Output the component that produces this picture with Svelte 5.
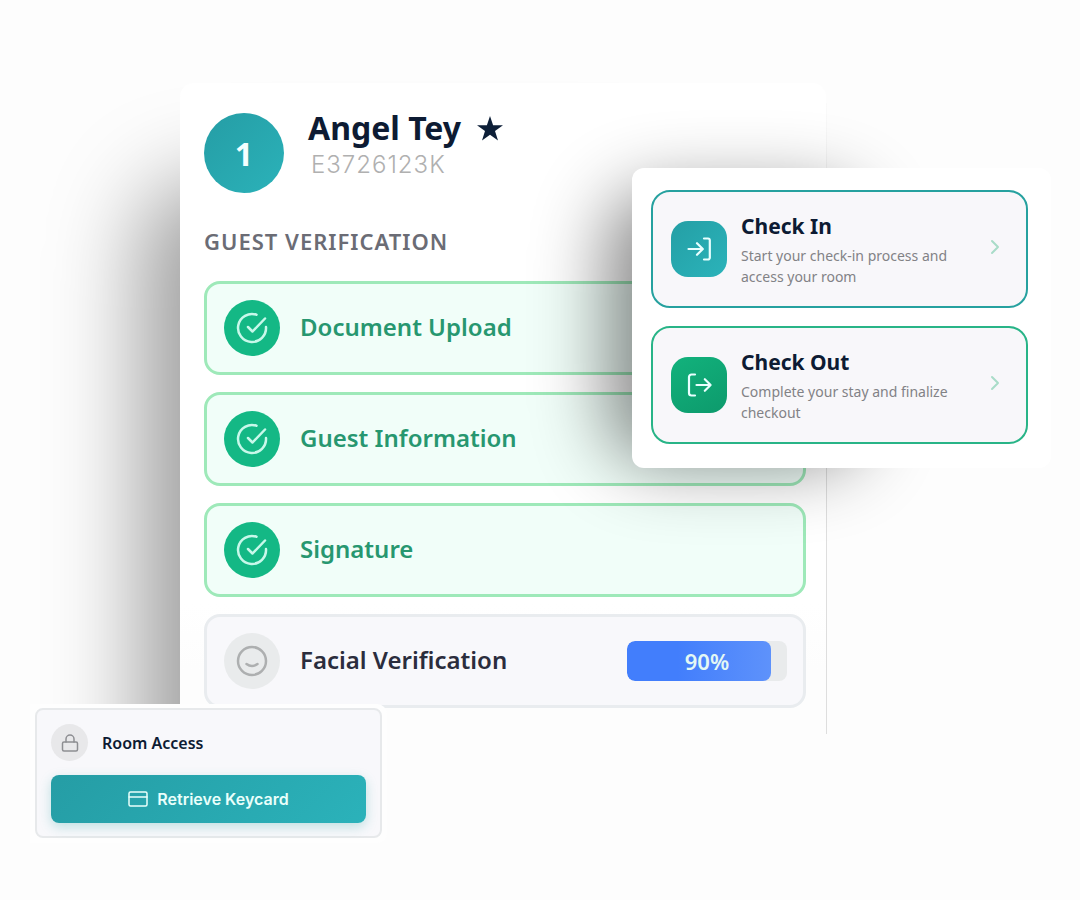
<script>
  const steps = [
    { label: 'Document Upload', done: true },
    { label: 'Guest Information', done: true },
    { label: 'Signature', done: true },
    { label: 'Facial Verification', done: false, progress: 90 }
  ];

  const actions = [
    { kind: 'in', title: 'Check In', text: 'Start your check-in process and access your room' },
    { kind: 'out', title: 'Check Out', text: 'Complete your stay and finalize checkout' }
  ];
</script>

<main class="stage">
  <section class="guest-wrap">
    <div class="guest">
      <header class="guest-head">
        <span class="avatar">1</span>
        <div class="who">
          <h1>
            Angel Tey
            <svg class="star" viewBox="0 0 26 25" aria-hidden="true">
              <path d="M13 0l3.1 9.3H26l-8 5.8 3 9.4-8-5.8-8 5.8 3-9.4-8-5.8h9.9z" fill="#0d1f38" />
            </svg>
          </h1>
          <p>E3726123K</p>
        </div>
      </header>

      <h2>GUEST VERIFICATION</h2>

      <ul class="steps">
        {#each steps as step}
          <li class="step" class:done={step.done}>
            <span class="badge">
              {#if step.done}
                <svg viewBox="0 0 32 32" aria-hidden="true">
                  <path d="M20.500 2.700A14 14 0 1 0 30 15" />
                  <path d="M12 15l4.500 4.500L29 6.500" />
                </svg>
              {:else}
                <svg viewBox="0 0 32 32" aria-hidden="true">
                  <circle cx="16" cy="16" r="14" />
                  <path d="M10.500 19q5.500 4 11 0" />
                </svg>
              {/if}
            </span>
            <span class="label">{step.label}</span>
            {#if step.progress}
              <div
                class="track"
                role="progressbar"
                aria-label={step.label}
                aria-valuenow={step.progress}
                aria-valuemin="0"
                aria-valuemax="100"
              >
                <div class="fill" style="width: {step.progress}%"></div>
                <span>{step.progress}%</span>
              </div>
            {/if}
          </li>
        {/each}
      </ul>
    </div>
  </section>

  <section class="actions-wrap">
    <div class="actions">
      {#each actions as action}
        <button class="action {action.kind}" type="button">
          <span class="tile">
            <svg viewBox="0 0 24 24" aria-hidden="true">
              {#if action.kind === 'in'}
                <path d="M17 1.500H21a1.800 1.800 0 0 1 1.800 1.800v17.400a1.800 1.800 0 0 1-1.800 1.800h-4" />
                <path d="M1.500 12h14M10 6.200L15.800 12l-5.800 5.800" />
              {:else}
                <path d="M8 1.500H4.500a2.500 2.500 0 0 0-2.500 2.500v16A2.500 2.500 0 0 0 4.500 22.500h3.500" />
                <path d="M9.500 12h14M17.800 6.200L23.600 12l-5.800 5.800" />
              {/if}
            </svg>
          </span>
          <span class="copy">
            <strong>{action.title}</strong>
            <small>{action.text}</small>
          </span>
          <svg class="chevron" viewBox="0 0 8 14" aria-hidden="true">
            <path d="M1 1l6 6-6 6" />
          </svg>
        </button>
      {/each}
    </div>
  </section>

  <section class="room-wrap">
    <div class="room">
      <div class="room-head">
        <span class="lock">
          <svg viewBox="0 0 18 18" aria-hidden="true">
            <rect x="1.500" y="8" width="15" height="9" rx="1.500" />
            <path d="M5 8V5a4 4 0 0 1 8 0v3" />
          </svg>
        </span>
        <h3>Room Access</h3>
      </div>
      <button class="retrieve" type="button">
        <svg viewBox="0 0 20 16" aria-hidden="true">
          <rect x="1" y="1" width="18" height="14" rx="1.500" />
          <path d="M1 6h18" />
        </svg>
        Retrieve Keycard
      </button>
    </div>
  </section>
</main>

<style>
  :global(body) {
    margin: 0;
    background: #fdfdfd;
  }

  .stage {
    position: relative;
    box-sizing: border-box;
    max-width: 1080px;
    min-height: 100vh;
    margin: 0 auto;
    padding: 83px 254px 165px 180px;
    overflow: hidden;
    font-family: 'Noto Sans', sans-serif;
    color: #0d1b33;
  }

  h1, h2, h3, p, ul {
    margin: 0;
    padding: 0;
  }

  svg {
    fill: none;
    stroke: currentColor;
    stroke-linecap: round;
    stroke-linejoin: round;
    flex: none;
    overflow: visible;
  }

  .guest-wrap {
    position: relative;
    isolation: isolate;
    clip-path: inset(-83px -254px 0 -180px);
  }

  .guest-wrap::before {
    content: '';
    position: absolute;
    z-index: -1;
    inset: 120px 120px -120px 0;
    border-radius: 40px;
    box-shadow: -18px 0 90px 22px rgba(0, 0, 0, 0.37);
  }

  .guest-wrap::after {
    content: '';
    position: absolute;
    inset: 20px -1px 0 auto;
    width: 1px;
    background: linear-gradient(#fafafa, #dedede 50%);
  }

  .guest {
    padding: 30px 20px 26px 24px;
    border-radius: 14px 14px 0 0;
    background: linear-gradient(#fff 80%, #fdfdfd 90%);
  }

  .guest-head {
    display: flex;
    gap: 24px;
    align-items: flex-start;
  }

  .avatar {
    display: grid;
    place-items: center;
    width: 80px;
    height: 80px;
    border-radius: 50%;
    background: linear-gradient(135deg, #259da5, #2bb2b9);
    color: #f4ffff;
    font-size: 32px;
    font-weight: 700;
  }

  h1 {
    display: flex;
    align-items: center;
    gap: 16px;
    font-size: 32px;
    line-height: 30px;
    font-weight: 700;
  }

  .star {
    width: 26px;
    height: 25px;
    stroke: none;
  }

  .who p {
    padding-left: 3px;
    font-family: Inter, sans-serif;
    font-size: 24px;
    line-height: 44px;
    font-weight: 300;
    letter-spacing: 1px;
    color: #b0b0b0;
  }

  h2 {
    margin-top: 34px;
    font-size: 22px;
    line-height: 29px;
    font-weight: 600;
    letter-spacing: 1px;
    color: #6b6c75;
  }

  .steps {
    display: grid;
    gap: 17px;
    margin-top: 25px;
    list-style: none;
  }

  .step {
    display: flex;
    align-items: center;
    gap: 20px;
    padding: 16px 16px 16px 17px;
    border: 3px solid #e9ecef;
    border-radius: 16px;
    background: #f8f8fb;
    color: #2b2d3d;
  }

  .step.done {
    border-color: #9ee9b9;
    background: #f1fef9;
    color: #279770;
  }

  .badge {
    display: grid;
    place-items: center;
    width: 56px;
    height: 56px;
    border-radius: 50%;
    background: #e9ebec;
    color: #adafb0;
  }

  .done .badge {
    background: #14b885;
    color: #c8f8ea;
  }

  .badge svg {
    width: 32px;
    height: 32px;
    stroke-width: 2.500;
  }

  .label {
    flex: 1;
    padding-bottom: 3px;
    font-size: 24px;
    font-weight: 600;
  }

  .track {
    position: relative;
    display: grid;
    place-items: center;
    width: 160px;
    height: 40px;
    border-radius: 8px;
    background: #e9ebec;
    overflow: hidden;
    color: #e3f8f4;
    font-size: 22px;
    font-weight: 600;
  }

  .fill {
    position: absolute;
    inset: 0 auto 0 0;
    border-radius: 8px;
    background: linear-gradient(90deg, #427efc 35%, #5e92fb);
  }

  .track span {
    position: relative;
  }

  .actions-wrap {
    position: absolute;
    top: 168px;
    right: 29px;
    width: 419px;
    isolation: isolate;
  }

  .actions-wrap::before {
    content: '';
    position: absolute;
    z-index: -1;
    inset: 58px 222px 39px 10px;
    border-radius: 20px;
    box-shadow: 0 0 72px 36px rgba(0, 0, 0, 0.46);
  }

  .actions {
    display: grid;
    gap: 18px;
    padding: 22px 23px 24px 19px;
    border-radius: 12px;
    background: #fff;
  }

  .action {
    display: flex;
    align-items: center;
    gap: 14px;
    width: 100%;
    min-height: 118px;
    padding: 0 27px 0 18px;
    border: 2px solid #26a19f;
    border-radius: 19px;
    background: #f8f7fa;
    color: inherit;
    font: inherit;
    text-align: left;
  }

  .action.out {
    border-color: #28b487;
  }

  .tile {
    display: grid;
    place-items: center;
    flex: none;
    width: 56px;
    height: 56px;
    border-radius: 17px;
    background: linear-gradient(135deg, #249fa5, #2bb3ba);
    color: #e9ffff;
  }

  .out .tile {
    background: linear-gradient(150deg, #12b27c, #0d9a6c);
  }

  .tile svg {
    width: 24px;
    height: 24px;
    stroke-width: 2.200;
  }

  .copy {
    flex: 1;
  }

  .copy strong {
    display: block;
    font-size: 21px;
    line-height: 30px;
    font-weight: 700;
  }

  .copy small {
    display: block;
    max-width: 220px;
    margin-top: 4px;
    font-size: 14px;
    line-height: 21px;
    color: #828286;
  }

  .chevron {
    width: 8px;
    height: 14px;
    margin-bottom: 4px;
    color: #a9dcc8;
    stroke-width: 2;
  }

  .room-wrap {
    position: absolute;
    top: 704px;
    left: 30px;
    width: 357px;
    box-sizing: border-box;
    padding: 4px 5px 5px;
    border-radius: 0 10px 10px 0;
    background: #fefefe;
  }

  .room {
    padding: 14px 14px 13px;
    border: 2px solid #e7e9eb;
    border-radius: 8px;
    background: #f8f8fb;
  }

  .room-head {
    display: flex;
    align-items: center;
    gap: 14px;
  }

  .lock {
    display: grid;
    place-items: center;
    width: 37px;
    height: 37px;
    border-radius: 50%;
    background: #e8e8ea;
    color: #8d8e92;
  }

  .lock svg {
    width: 18px;
    height: 18px;
    stroke-width: 1.500;
  }

  h3 {
    font-size: 16px;
    font-weight: 600;
  }

  .retrieve {
    display: flex;
    align-items: center;
    justify-content: center;
    gap: 9px;
    width: 100%;
    height: 48px;
    margin-top: 14px;
    padding: 0;
    border: 0;
    border-radius: 8px;
    background: linear-gradient(135deg, #259da5, #2bb2ba);
    box-shadow: 0 4px 12px rgba(43, 160, 160, 0.28);
    color: #e9fffb;
    font-family: Inter, sans-serif;
    font-size: 16px;
    font-weight: 600;
  }

  .retrieve svg {
    width: 20px;
    height: 16px;
    stroke-width: 1.500;
  }
</style>
